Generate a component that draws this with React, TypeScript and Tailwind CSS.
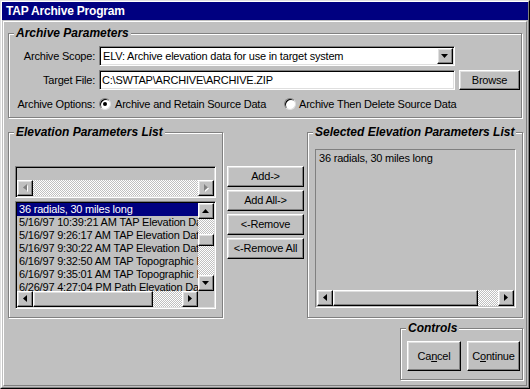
import type { ReactNode } from "react";

const raised =
  "border border-t-white border-l-white border-r-black border-b-black shadow-[inset_-1px_-1px_0_#808080,inset_1px_1px_0_#dfdfdf]";
const sunken =
  "border border-t-[#808080] border-l-[#808080] border-r-white border-b-white shadow-[inset_1px_1px_0_#000,inset_-1px_-1px_0_#dfdfdf] p-px";
const checker =
  "bg-[image:repeating-conic-gradient(#c0c0c0_0_25%,#fff_0_50%)] bg-[length:2px_2px]";

const sourceItems = [
  "36 radials, 30 miles long",
  "5/16/97 10:39:21 AM TAP Elevation Data",
  "5/16/97 9:26:17 AM TAP Elevation Data",
  "5/16/97 9:30:22 AM TAP Elevation Data",
  "6/16/97 9:32:50 AM TAP Topographic Data",
  "6/16/97 9:35:01 AM TAP Topographic Data",
  "6/26/97 4:27:04 PM Path Elevation Data",
];

type Dir = "up" | "down" | "left" | "right";

function Tri({ dir, disabled = false }: { dir: Dir; disabled?: boolean }) {
  const vertical = dir === "up" || dir === "down";
  const w = vertical ? 7 : 4;
  const h = vertical ? 4 : 7;
  const pts = {
    up: "3.5,0 7,4 0,4",
    down: "0,0 7,0 3.5,4",
    left: "4,0 4,7 0,3.5",
    right: "0,0 4,3.5 0,7",
  }[dir];
  return (
    <svg width={w + 1} height={h + 1} viewBox={`0 0 ${w + 1} ${h + 1}`}>
      {disabled && <polygon points={pts} fill="#fff" transform="translate(1 1)" />}
      <polygon points={pts} fill={disabled ? "#808080" : "#000"} />
    </svg>
  );
}

function ScrollBtn({ dir, disabled }: { dir: Dir; disabled?: boolean }) {
  return (
    <div className={`${raised} w-[16px] h-[16px] shrink-0 flex items-center justify-center bg-[#c0c0c0]`}>
      <Tri dir={dir} disabled={disabled} />
    </div>
  );
}

// horizontal scroll bar, thumb sits right after the left arrow
function HScroll({ thumb, disabled, className = "" }: { thumb?: number; disabled?: boolean; className?: string }) {
  return (
    <div className={`flex h-[16px] shrink-0 ${className}`}>
      <ScrollBtn dir="left" disabled={disabled} />
      {thumb ? (
        <div className={`${raised} h-[16px] shrink-0 bg-[#c0c0c0]`} style={{ width: thumb }} />
      ) : null}
      <div className={`flex-1 ${checker}`} />
      <ScrollBtn dir="right" disabled={disabled} />
    </div>
  );
}

function GroupBox({
  label,
  className,
  children,
}: {
  label: string;
  className: string;
  children?: ReactNode;
}) {
  return (
    <div
      className={`relative border border-[#808080] shadow-[inset_1px_1px_0_#fff,1px_1px_0_#fff] ${className}`}
    >
      <span className="absolute -top-[8px] left-[5px] px-[2px] bg-[#c0c0c0] text-[12px] leading-[14px] font-bold italic tracking-normal">
        {label}
      </span>
      {children}
    </div>
  );
}

function Button({ className, children }: { className: string; children: ReactNode }) {
  return (
    <div className={`${raised} flex items-center justify-center bg-[#c0c0c0] ${className}`}>
      {children}
    </div>
  );
}

function Radio({ checked }: { checked?: boolean }) {
  return (
    <div className="w-[12px] h-[12px] rounded-full border border-t-[#808080] border-l-[#808080] border-r-[#dfdfdf] border-b-[#dfdfdf] bg-white shadow-[inset_1px_1px_0_#000] flex items-center justify-center shrink-0">
      {checked && <div className="w-[4px] h-[4px] rounded-full bg-black" />}
    </div>
  );
}

export default function App() {
  return (
    <div className="w-[530px] h-[389px] bg-[#c0c0c0] border border-t-[#dfdfdf] border-l-[#dfdfdf] border-r-black border-b-black font-['Liberation_Sans',Arial,sans-serif] text-[11px] tracking-[-0.2px] text-black select-none">
      <div className="h-full border border-t-white border-l-white border-r-[#808080] border-b-[#808080] flex flex-col">
        <div className="h-[18px] bg-[#000080] text-white text-[12px] font-bold tracking-[-0.2px] leading-[18px] pl-[4px]">
          TAP Archive Program
        </div>

        <div className="mt-px mx-px mb-px flex-1 border border-t-white border-l-white border-r-[#808080] border-b-[#808080] flex flex-col">
          <GroupBox label="Archive Parameters" className="ml-[4px] mt-[11px] w-[514px] h-[85px] pt-[12px]">
            <div className="flex items-center h-[20px]">
              <span className="w-[90px] pr-[4px] text-right">Archive Scope:</span>
              <div className={`${sunken} w-[356px] h-[20px] bg-white flex items-center`}>
                <span className="flex-1 pl-[2px] leading-[13px]">
                  ELV: Archive elevation data for use in target system
                </span>
                <ScrollBtn dir="down" />
              </div>
            </div>
            <div className="flex items-center h-[20px] mt-[4px]">
              <span className="w-[90px] pr-[4px] text-right">Target File:</span>
              <div className={`${sunken} w-[356px] h-[20px] bg-white flex items-center pl-[2px]`}>
                C:\SWTAP\ARCHIVE\ARCHIVE.ZIP
              </div>
              <Button className="ml-[4px] w-[61px] h-[20px]">Browse</Button>
            </div>
            <div className="flex items-center h-[14px] mt-[7px]">
              <span className="w-[90px] pr-[4px] text-right">Archive Options:</span>
              <div className="w-[185px] flex items-center gap-[4px]">
                <Radio checked />
                <span>Archive and Retain Source Data</span>
              </div>
              <div className="flex items-center gap-[3px]">
                <Radio />
                <span>Archive Then Delete Source Data</span>
              </div>
            </div>
          </GroupBox>

          <div className="flex mt-[14px] ml-[4px] h-[186px]">
            <GroupBox label="Elevation Parameters List" className="w-[215px] h-[186px] pl-[6px] pt-[33px]">
              <div className={`${sunken} w-[201px] h-[32px] bg-[#c0c0c0] flex flex-col`}>
                <div className="flex-1" />
                <HScroll disabled />
              </div>
              <div className={`${sunken} mt-[3px] w-[201px] h-[108px] bg-[#c0c0c0] flex flex-col`}>
                <div className="flex h-[88px]">
                  <div className="flex-1 overflow-hidden">
                    {sourceItems.map((item, i) => (
                      <div
                        key={item}
                        className={`h-[13px] leading-[13px] pl-[2px] whitespace-nowrap ${
                          i === 0 ? "bg-[#000080] text-white" : ""
                        }`}
                      >
                        {item}
                      </div>
                    ))}
                  </div>
                  <div className="w-[16px] flex flex-col">
                    <ScrollBtn dir="up" />
                    <div className={`h-[15px] ${checker}`} />
                    <div className={`${raised} h-[12px] bg-[#c0c0c0]`} />
                    <div className={`flex-1 ${checker}`} />
                    <ScrollBtn dir="down" />
                  </div>
                </div>
                <div className="flex h-[16px]">
                  <HScroll thumb={120} className="flex-1" />
                  <div className="w-[16px]" />
                </div>
              </div>
            </GroupBox>

            <div className="ml-[4px] w-[77px] pt-[34px] flex flex-col gap-[3px]">
              <Button className="h-[21px]">Add-&gt;</Button>
              <Button className="h-[21px]">Add All-&gt;</Button>
              <Button className="h-[21px]">&lt;-Remove</Button>
              <Button className="h-[21px]">&lt;-Remove All</Button>
            </div>

            <GroupBox label="Selected Elevation Parameters List" className="ml-[3px] w-[216px] h-[186px] pl-[7px] pt-[16px]">
              <div className="w-[201px] h-[159px] border border-t-[#808080] border-l-[#808080] border-r-white border-b-white p-px bg-[#c0c0c0] flex flex-col">
                <div className="flex-1 pl-[2px] pt-px leading-[13px]">36 radials, 30 miles long</div>
                <HScroll thumb={145} />
              </div>
            </GroupBox>
          </div>

          <GroupBox label="Controls" className="mt-[10px] ml-[396px] w-[123px] h-[52px] pl-[6px] pt-[12px]">
            <div className="flex gap-[6px]">
              <Button className="w-[54px] h-[30px]">
                <span>
                  Ca<u>n</u>cel
                </span>
              </Button>
              <Button className="w-[53px] h-[30px]">
                <span>
                  C<u>o</u>ntinue
                </span>
              </Button>
            </div>
          </GroupBox>
        </div>
      </div>
    </div>
  );
}
